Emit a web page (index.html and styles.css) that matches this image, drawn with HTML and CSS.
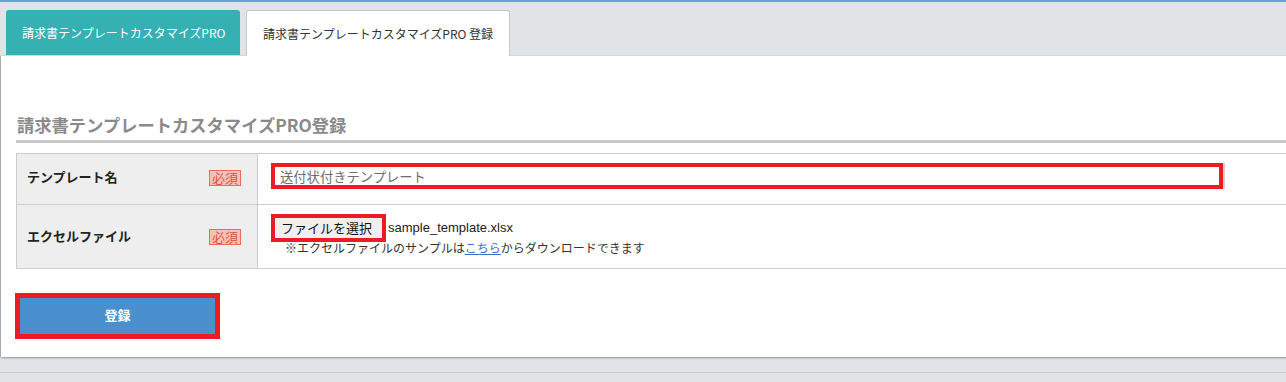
FILE: index.html
```html
<!DOCTYPE html>
<html lang="ja">
<head>
    <meta charset="UTF-8">
    <meta name="viewport" content="width=device-width, initial-scale=1.0">
    <title>請求書テンプレートカスタマイズPRO 登録</title>
    <link rel="stylesheet" href="styles.css">
</head>
<body>
    <nav class="tabs">
        <a href="#" class="tab tab-list">請求書テンプレートカスタマイズPRO</a>
        <a href="#" class="tab tab-current">請求書テンプレートカスタマイズPRO 登録</a>
    </nav>

    <section class="panel">
        <h2 class="panel-title">請求書テンプレートカスタマイズPRO登録</h2>

        <table class="form-table">
            <tr class="row-name">
                <th>
                    <span>テンプレート名</span>
                    <span class="required">必須</span>
                </th>
                <td>
                    <input type="text" class="text-input mark" value="送付状付きテンプレート">
                </td>
            </tr>
            <tr class="row-file">
                <th>
                    <span>エクセルファイル</span>
                    <span class="required">必須</span>
                </th>
                <td>
                    <div class="file-line">
                        <span class="file-button mark">ファイルを選択</span>
                        <span class="file-name">sample_template.xlsx</span>
                    </div>
                    <p class="note">※エクセルファイルのサンプルは<a href="#">こちら</a>からダウンロードできます</p>
                </td>
            </tr>
        </table>

        <button class="submit-button mark">登録</button>
    </section>

    <div class="footer-line"></div>
</body>
</html>
```

FILE: styles.css
```css
html, body {
    overflow: hidden;
}

body {
    margin: 0;
    padding: 0;
    background-color: #e1e4e7;
    border-top: 2px solid #6a9fd6;
    font-family: "Noto Sans CJK JP", "Liberation Sans", sans-serif;
    color: #333333;
}

.tabs {
    display: flex;
    gap: 6px;
    padding: 8px 0 0 6px;
    height: 46px;
}

.tab {
    display: flex;
    align-items: center;
    text-decoration: none;
    font-size: 12px;
    border-radius: 3px 3px 0 0;
    box-sizing: border-box;
}

.tab-list {
    width: 234px;
    height: 45px;
    padding-left: 16px;
    background-color: #35b0b3;
    color: #ffffff;
}

.tab-current {
    width: 264px;
    height: 46px;
    padding-left: 16px;
    background-color: #ffffff;
    color: #333333;
    border: 1px solid #c4c6c8;
    border-bottom: none;
}

.panel {
    width: 1320px;
    height: 301px;
    margin-left: 1px;
    padding: 57px 0 0 15px;
    box-sizing: border-box;
    background-color: #ffffff;
    box-shadow: 0 1px 2px rgba(0, 0, 0, 0.35), -1px 0 1px rgba(0, 0, 0, 0.15);
}

.panel-title {
    margin: 0 0 10px 0;
    padding: 0 0 3px 1px;
    font-size: 17.3px;
    line-height: 24px;
    font-weight: bold;
    color: #8a8a8a;
    border-bottom: 3px solid #c8c8c8;
}

.form-table {
    width: 100%;
    border-collapse: collapse;
}

.form-table th,
.form-table td {
    border: 1px solid #cccccc;
    padding: 0;
    text-align: left;
}

.form-table th {
    width: 241px;
    padding: 0 16px 4px 10px;
    background-color: #eeeeee;
    font-size: 13px;
    line-height: 16px;
    font-weight: bold;
    color: #222222;
    box-sizing: border-box;
}

.row-file th {
    padding-bottom: 1px;
}

.form-table th span:first-child {
    float: left;
}

.form-table th::after {
    content: "";
    display: block;
    clear: both;
}

.row-name {
    height: 51px;
}

.row-file {
    height: 64px;
}

.required {
    float: right;
    font-size: 13px;
    line-height: 14px;
    font-weight: normal;
    color: #e0524a;
    background-color: #f6c3b3;
    border: 1px solid #ec6a5e;
    padding: 0 2px;
    margin-top: 1px;
}

.form-table td {
    padding-left: 13px;
}

.row-name td {
    padding-bottom: 6px;
}

.mark {
    border: 4px solid #ed1c24;
    box-sizing: border-box;
}

.text-input {
    display: block;
    width: 952px;
    height: 26px;
    padding: 0 5px;
    font-family: "Noto Sans CJK JP", sans-serif;
    font-size: 13.3px;
    color: #6e6e6e;
    outline: none;
    box-shadow: 2px 0 0 #d0d0d0;
}

.file-line {
    display: flex;
    align-items: center;
    padding-top: 3px;
}

.file-button {
    display: inline-block;
    width: 115px;
    height: 28px;
    line-height: 19px;
    padding: 0 0 0 6px;
    background-color: #efefef;
    font-size: 13px;
    color: #111111;
}

.file-name {
    margin-left: 2px;
    font-family: "Liberation Sans", Arial, sans-serif;
    font-size: 13px;
    color: #222222;
}

.note {
    margin: -2px 0 7px 14px;
    font-size: 12px;
    line-height: 16px;
    color: #333333;
}

.note a {
    color: #3a6fc8;
}

.submit-button {
    display: block;
    width: 205px;
    height: 46px;
    margin: 24px 0 0 -1px;
    padding: 0 0 3px 0;
    background-color: #4a8fce;
    color: #ffffff;
    font-family: "Noto Sans CJK JP", sans-serif;
    font-size: 13px;
    font-weight: bold;
    border-width: 5px;
    cursor: pointer;
}

.footer-line {
    margin-top: 15px;
    border-top: 1px solid #c8cbce;
}
```
